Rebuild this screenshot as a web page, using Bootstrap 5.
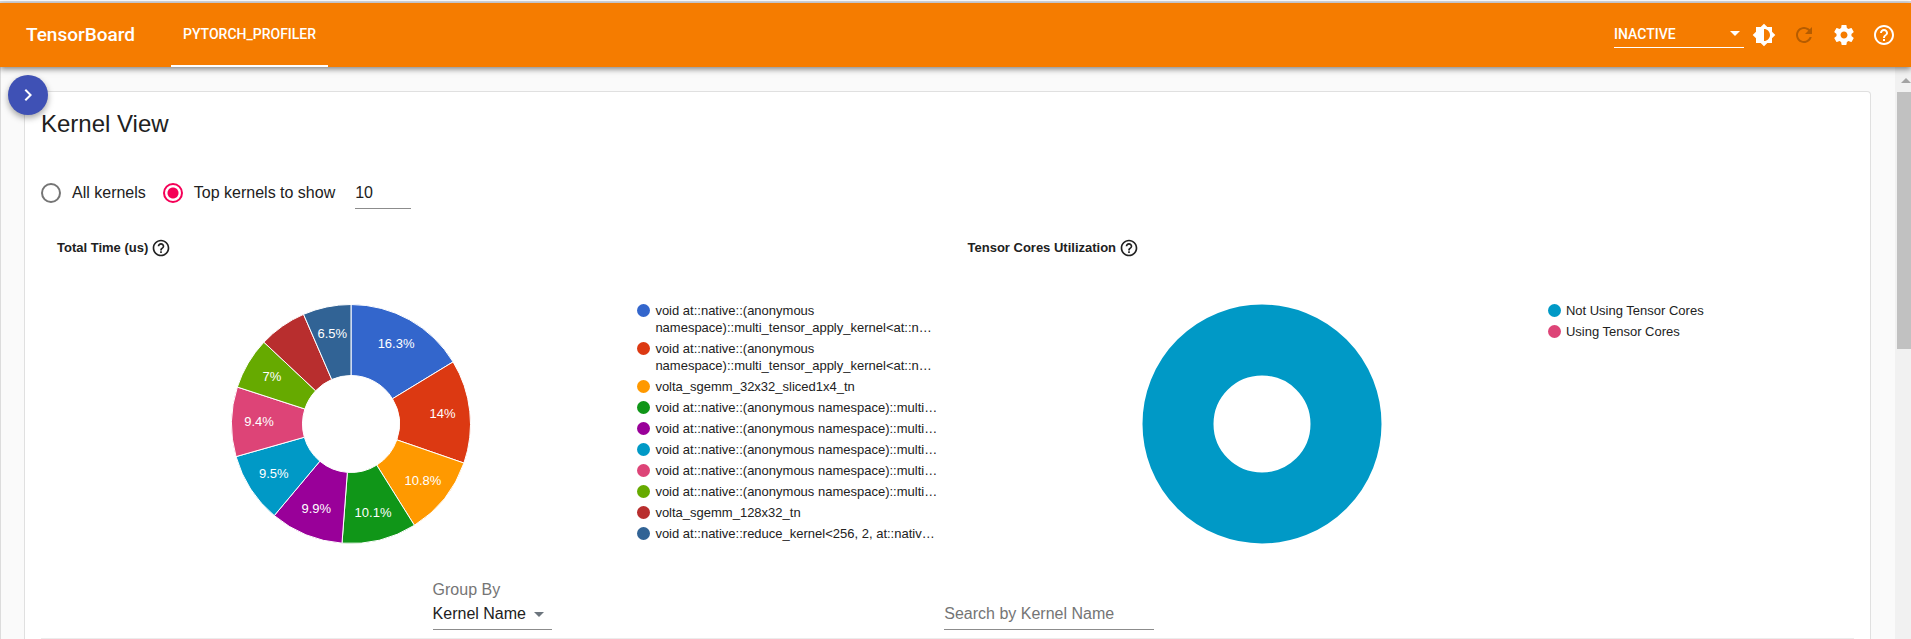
<!DOCTYPE html>
<html lang="en">
<head>
<meta charset="utf-8">
<meta name="viewport" content="width=device-width, initial-scale=1">
<title>TensorBoard</title>
<link href="https://cdn.jsdelivr.net/npm/bootstrap@5.3.0/dist/css/bootstrap.min.css" rel="stylesheet">
<style>
  body { font-family: "Liberation Sans", Arial, sans-serif; color: #212121; background: #fafafa; line-height: 24px; }
  .window-edge { height: 3px; background: #dadce0; border-top: 1px solid #fff; }
  .topbar { height: 64px; background: #f57c00; box-shadow: 0 2px 6px rgba(0,0,0,.5); z-index: 2; font-family: Roboto, sans-serif; }
  .brand-name { font-size: 19px; font-weight: 500; padding-left: 26px; width: 171px; }
  .plugin-tab { font-size: 14px; font-weight: 500; padding: 0 12px; border-bottom: 2px solid #fff; }
  .tools { padding-right: 7px; }
  .reload-state { width: 130px; height: 26px; padding-bottom: 2px; font-size: 14px; font-weight: 500; border-bottom: 1px solid #fff; }
  .flat-select { appearance: none; background: transparent; border: 0; padding: 0; color: inherit; outline: 0; font: inherit; }
  .tool-btn { width: 40px; height: 40px; padding: 8px; border: 0; background: none; color: #fff; display: flex; }
  .tool-btn:disabled { color: rgba(0,0,0,.26); }
  .caret-down { border: 5px solid transparent; border-top-color: currentColor; border-bottom: 0; pointer-events: none; }
  .stage { border-left: 1px solid #dcdcdc; min-height: 0; }
  .open-panel { width: 40px; height: 40px; left: 7px; top: 8px; background: #3f51b5; color: #fff; border: 0; padding: 8px; box-shadow: 0 3px 6px rgba(0,0,0,.35); }
  .view-panel { margin: 24px 24px 0 23px; padding: 16px 16px 0; background: #fff; border: 1px solid #e0e0e0; border-bottom: 0; border-radius: 4px 4px 0 0; }
  .view-title { font-size: 24px; line-height: 32px; font-weight: 400; margin-bottom: 37px; }
  .kernel-radio { appearance: none; width: 20px; height: 20px; border: 2px solid #757575; border-radius: 50%; margin: 0; }
  .kernel-radio:checked { border-color: #f50057; background: radial-gradient(circle, #f50057 5px, transparent 6px); }
  .kernel-radio + label { margin: 0 17px 0 11px; }
  .line-input { border: 0; border-bottom: 1px solid #8c8c8c; border-radius: 0; background: transparent; padding: 0; outline: 0; height: 32px; color: inherit; }
  .line-input::placeholder { color: #757575; opacity: 1; }
  .count-input { width: 56px; margin-left: 3px; }
  .charts { margin: 27px -8px 0 0; }
  .chart-title { font-size: 13px; font-weight: 700; line-height: 24px; padding-left: 16px; gap: 3px; }
  .chart-body { padding-top: 42px; }
  .pie-cell { flex: 0 0 65.5%; padding: 2px 0 0 24px; }
  .pie-label { font-size: 13px; fill: #fff; text-anchor: middle; }
  .legend-list { font-size: 13px; line-height: 17px; gap: 4px; color: #222; }
  .legend-list li { gap: 5px; }
  .legend-dot { width: 13px; height: 13px; border-radius: 50%; flex: none; margin-top: 2px; }
  .filters { padding: 34px 0 8px 21.6%; border-bottom: 1px solid #ececec; }
  .group-cell { flex: 0 0 36%; }
  .group-cell label { color: #757575; }
  .group-select { width: 119px; height: 28px; padding-bottom: 3px; border-bottom: 1px solid #8c8c8c; }
  .search-input { width: 210px; }
  .scroll-track { width: 16px; background: #f1f1f1; padding-left: 2px; overflow: hidden; }
  .scroll-up { height: 25px; color: #a3a3a3; padding: 11px 0 0 4px; }
  .scroll-up i { display: block; width: 0; border: 5px solid transparent; border-bottom-color: currentColor; border-top: 0; }
  .scroll-thumb { height: 45%; background: #c1c1c1; }
</style>
</head>
<body class="vh-100 overflow-hidden d-flex flex-column">
<svg class="d-none" xmlns="http://www.w3.org/2000/svg">
  <symbol id="help" viewBox="0 0 24 24"><path fill="currentColor" d="M11 18h2v-2h-2v2zm1-16C6.48 2 2 6.48 2 12s4.48 10 10 10 10-4.48 10-10S17.52 2 12 2zm0 18c-4.41 0-8-3.59-8-8s3.59-8 8-8 8 3.59 8 8-3.59 8-8 8zm0-14c-2.21 0-4 1.79-4 4h2c0-1.1.9-2 2-2s2 .9 2 2c0 2-3 1.75-3 5h2c0-2.25 3-2.5 3-5 0-2.21-1.79-4-4-4z"/></symbol>
</svg>
<div class="window-edge flex-shrink-0"></div>
<header class="topbar d-flex flex-shrink-0 position-relative">
  <div class="brand-name text-white align-self-center">TensorBoard</div>
  <nav class="d-flex"><a href="#" class="plugin-tab text-white text-decoration-none d-flex align-items-center">PYTORCH_PROFILER</a></nav>
  <div class="tools ms-auto d-flex align-items-center text-white">
    <div class="reload-state position-relative d-flex align-items-center">
      <select class="flat-select w-100" aria-label="Reload state"><option>INACTIVE</option></select>
      <span class="caret-down position-absolute end-0 me-1"></span>
    </div>
    <button class="tool-btn" aria-label="Theme"><svg width="24" height="24" viewBox="0 0 24 24"><path fill="currentColor" d="M20 15.31L23.31 12 20 8.69V4h-4.69L12 .69 8.69 4H4v4.69L.69 12 4 15.31V20h4.69L12 23.31 15.31 20H20v-4.69zM12 18V6c3.31 0 6 2.69 6 6s-2.69 6-6 6z"/></svg></button>
    <button class="tool-btn" aria-label="Reload" disabled><svg width="24" height="24" viewBox="0 0 24 24"><path fill="currentColor" d="M17.65 6.35C16.2 4.9 14.21 4 12 4c-4.42 0-7.99 3.58-7.99 8s3.57 8 7.99 8c3.73 0 6.84-2.55 7.73-6h-2.08c-.82 2.33-3.04 4-5.65 4-3.31 0-6-2.69-6-6s2.69-6 6-6c1.66 0 3.14.69 4.22 1.78L13 11h7V4l-2.35 2.35z"/></svg></button>
    <button class="tool-btn" aria-label="Settings"><svg width="24" height="24" viewBox="0 0 24 24"><path fill="currentColor" d="M19.43 12.98c.04-.32.07-.64.07-.98s-.03-.66-.07-.98l2.11-1.65c.19-.15.24-.42.12-.64l-2-3.46c-.12-.22-.39-.3-.61-.22l-2.49 1c-.52-.4-1.08-.73-1.69-.98l-.38-2.65C14.46 2.18 14.25 2 14 2h-4c-.25 0-.46.18-.49.42l-.38 2.65c-.61.25-1.17.59-1.69.98l-2.49-1c-.23-.09-.49 0-.61.22l-2 3.46c-.13.22-.07.49.12.64l2.11 1.65c-.04.32-.07.65-.07.98s.03.66.07.98l-2.11 1.65c-.19.15-.24.42-.12.64l2 3.46c.12.22.39.3.61.22l2.49-1c.52.4 1.08.73 1.69.98l.38 2.65c.03.24.24.42.49.42h4c.25 0 .46-.18.49-.42l.38-2.65c.61-.25 1.17-.59 1.69-.98l2.49 1c.23.09.49 0 .61-.22l2-3.46c.12-.22.07-.49-.12-.64l-2.11-1.65zM12 15.5c-1.93 0-3.5-1.57-3.5-3.5s1.57-3.5 3.5-3.5 3.5 1.57 3.5 3.5-1.57 3.5-3.5 3.5z"/></svg></button>
    <button class="tool-btn" aria-label="Help"><svg width="24" height="24"><use href="#help"/></svg></button>
  </div>
</header>

<div class="stage position-relative d-flex flex-grow-1">
  <button class="open-panel position-absolute rounded-circle d-flex" aria-label="Open panel"><svg width="24" height="24" viewBox="0 0 24 24"><path fill="currentColor" d="M10 6L8.59 7.41 13.17 12l-4.58 4.59L10 18l6-6z"/></svg></button>
  <main class="view-panel flex-grow-1">
    <h1 class="view-title">Kernel View</h1>
    <div class="d-flex align-items-center">
      <input class="kernel-radio" type="radio" name="show" id="all">
      <label for="all">All kernels</label>
      <input class="kernel-radio" type="radio" name="show" id="top" checked>
      <label for="top">Top kernels to show</label>
      <input class="line-input count-input" type="text" value="10" aria-label="Number of kernels">
    </div>

    <div class="charts d-flex">
      <section class="w-50">
        <h2 class="chart-title d-flex align-items-center mb-0">Total Time (us) <svg width="20" height="20"><use href="#help"/></svg></h2>
        <div class="chart-body d-flex">
          <div class="pie-cell text-center">
            <svg id="time-pie" width="240" height="240" viewBox="-120 -120 240 240"></svg>
          </div>
          <ul id="time-legend" class="legend-list list-unstyled d-flex flex-column text-nowrap mb-0"></ul>
        </div>
      </section>
      <section class="w-50">
        <h2 class="chart-title d-flex align-items-center mb-0">Tensor Cores Utilization <svg width="20" height="20"><use href="#help"/></svg></h2>
        <div class="chart-body d-flex">
          <div class="pie-cell text-center">
            <svg width="240" height="240" viewBox="-120 -120 240 240"><circle r="84" fill="none" stroke="#0099c6" stroke-width="71"/></svg>
          </div>
          <ul id="core-legend" class="legend-list list-unstyled d-flex flex-column text-nowrap mb-0"></ul>
        </div>
      </section>
    </div>

    <div class="filters d-flex align-items-end">
      <div class="group-cell">
        <label for="group" class="d-block">Group By</label>
        <div class="group-select position-relative d-flex align-items-center">
          <select id="group" class="flat-select w-100"><option>Kernel Name</option></select>
          <span class="caret-down position-absolute end-0 me-2 text-secondary"></span>
        </div>
      </div>
      <input class="line-input search-input" type="text" placeholder="Search by Kernel Name" aria-label="Search by Kernel Name">
    </div>
  </main>
  <div class="scroll-track flex-shrink-0"><div class="scroll-up"><i></i></div><div class="scroll-thumb"></div></div>
</div>

<script>
  const long = 'void at::native::(anonymous namespace)::multi…';
  const wrapped = 'void at::native::(anonymous\nnamespace)::multi_tensor_apply_kernel<at::n…';
  const kernels = [
    [16.3, '#3366cc', wrapped, true],
    [14, '#dc3912', wrapped, true],
    [10.8, '#ff9900', 'volta_sgemm_32x32_sliced1x4_tn', true],
    [10.1, '#109618', long, true],
    [9.9, '#990099', long, true],
    [9.5, '#0099c6', long, true],
    [9.4, '#dd4477', long, true],
    [7, '#66aa00', long, true],
    [6.5, '#b82e2e', 'volta_sgemm_128x32_tn', false],
    [6.5, '#316395', 'void at::native::reduce_kernel<256, 2, at::nativ…', true]
  ];
  const cores = [[100, '#0099c6', 'Not Using Tensor Cores'], [0, '#dd4477', 'Using Tensor Cores']];

  function legend(id, rows) {
    const ul = document.getElementById(id);
    for (const [, colour, text] of rows) {
      const li = document.createElement('li');
      li.className = 'd-flex';
      const dot = document.createElement('span');
      dot.className = 'legend-dot';
      dot.style.background = colour;
      const name = document.createElement('span');
      name.style.whiteSpace = 'pre';
      name.textContent = text;
      li.append(dot, name);
      ul.append(li);
    }
  }

  function pie(id, rows) {
    const outer = 119.5, inner = 48.5, mid = 92;
    const total = rows.reduce((s, r) => s + r[0], 0);
    const at = (r, f) => [r * Math.sin(f * 2 * Math.PI), -r * Math.cos(f * 2 * Math.PI)];
    let start = 0, slices = '', labels = '';
    for (const [share, colour, , shown] of rows) {
      const end = start + share / total;
      slices += `<path fill="${colour}" stroke="#fff" d="M${at(outer, start)}A${outer},${outer} 0 0 1 ${at(outer, end)}L${at(inner, end)}A${inner},${inner} 0 0 0 ${at(inner, start)}Z"/>`;
      const [x, y] = at(mid, (start + end) / 2);
      if (shown) labels += `<text class="pie-label" x="${x}" y="${y + 4}">${share}%</text>`;
      start = end;
    }
    document.getElementById(id).innerHTML = slices + labels;
  }

  pie('time-pie', kernels);
  legend('time-legend', kernels);
  legend('core-legend', cores);
</script>
<script src="https://cdn.jsdelivr.net/npm/bootstrap@5.3.0/dist/js/bootstrap.bundle.min.js"></script>
</body>
</html>
